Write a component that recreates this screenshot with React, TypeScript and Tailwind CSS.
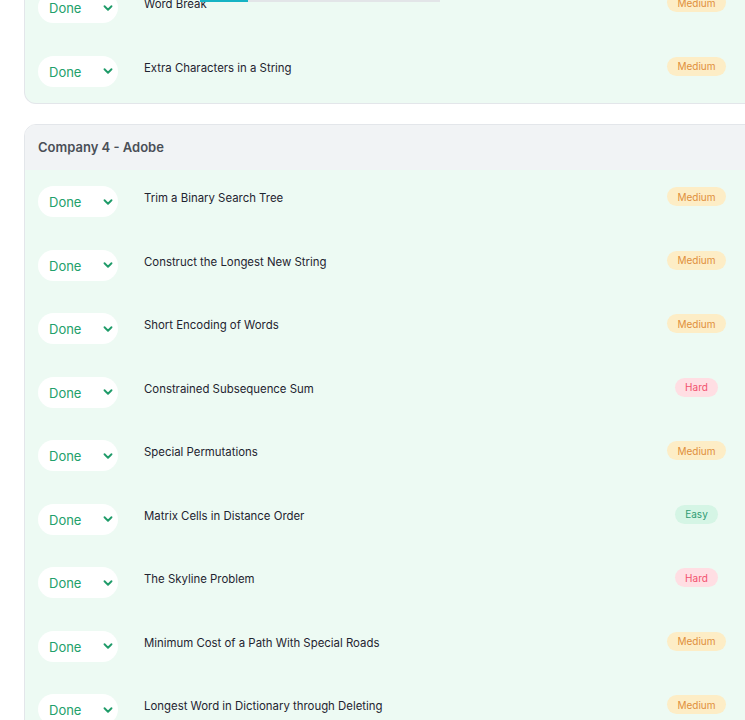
import React from "react";
import { ChevronDown } from "lucide-react";

type Diff = "Easy" | "Medium" | "Hard";

const badgeCls: Record<Diff, string> = {
  Medium: "bg-[#fdedc6] text-[#e08f3c] px-[10px]",
  Hard: "bg-[#ffdee3] text-[#f2506d] px-[10px]",
  Easy: "bg-[#d5f5e5] text-[#2f9c72] px-[10px]",
};

function Row({ title, diff }: { title: string; diff: Diff }) {
  return (
    <div className="flex items-start h-[63.5px] pt-4 pl-[13px] pr-[58px]">
      <div className="flex items-center justify-between w-[80px] h-[31px] rounded-full bg-white pl-[11px] pr-[3px] shrink-0">
        <span className="text-[13px] text-[#22a06b] leading-none mt-[2px]">Done</span>
        <ChevronDown size={14} strokeWidth={3.2} className="text-[#1f9b69]" />
      </div>
      <div className="flex-1 pl-[26px] pt-[5px] text-[11.4px] leading-[14px] text-[#1f2430]">{title}</div>
      <div className="w-[57px] flex justify-center mt-[1px]">
        <span className={`inline-flex items-center h-[19px] rounded-full text-[10px] leading-none ${badgeCls[diff]}`}>{diff}</span>
      </div>
    </div>
  );
}

export default function App() {
  const adobe: [string, Diff][] = [
    ["Trim a Binary Search Tree", "Medium"],
    ["Construct the Longest New String", "Medium"],
    ["Short Encoding of Words", "Medium"],
    ["Constrained Subsequence Sum", "Hard"],
    ["Special Permutations", "Medium"],
    ["Matrix Cells in Distance Order", "Easy"],
    ["The Skyline Problem", "Hard"],
    ["Minimum Cost of a Path With Special Roads", "Medium"],
    ["Longest Word in Dictionary through Deleting", "Medium"],
  ];
  return (
    <div
      className="relative w-[745px] h-[720px] overflow-hidden bg-white"
      style={{ fontFamily: "Inter, 'Noto Sans', sans-serif" }}
    >
      <div className="absolute top-0 left-[200px] h-[2px] w-[240px] bg-[#e3e5e8] z-10">
        <div className="h-full w-[48px] bg-[#16b3c4]" />
      </div>
      <div className="-mt-[24px] ml-[24px] w-[760px] flex flex-col gap-[20px]">
        <div className="rounded-b-[12px] border border-t-0 border-[#e3e6ea] bg-[#edfaf3] overflow-hidden">
          <Row title="Word Break" diff="Medium" />
          <Row title="Extra Characters in a String" diff="Medium" />
        </div>
        <div className="rounded-[12px] border border-[#e3e6ea] overflow-hidden">
          <div className="h-[45px] bg-[#f1f3f5] flex items-center pl-[13px] text-[13px] font-semibold text-[#4a4f57]">
            Company 4 - Adobe
          </div>
          <div className="bg-[#edfaf3]">
            {adobe.map(([t, d]) => (
              <Row key={t} title={t} diff={d} />
            ))}
          </div>
        </div>
      </div>
    </div>
  );
}
